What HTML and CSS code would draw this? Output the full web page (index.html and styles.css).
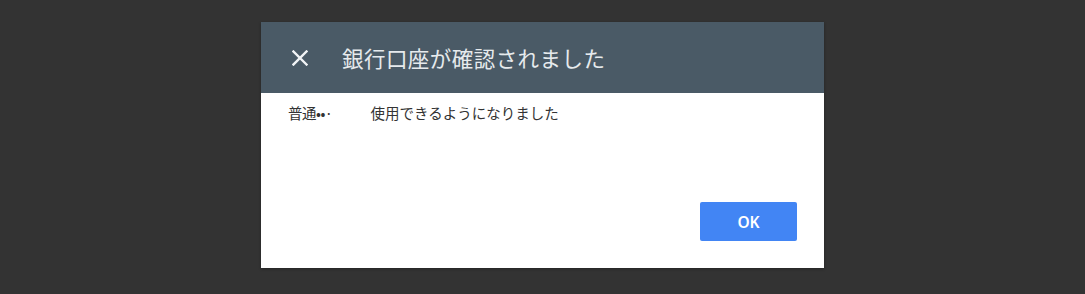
FILE: index.html
```html
<!DOCTYPE html>
<html lang="ja">
<head>
    <meta charset="UTF-8">
    <title>銀行口座が確認されました</title>
    <link rel="stylesheet" href="styles.css">
</head>
<body>
    <div class="dialog">
        <div class="dialog-header">
            <span class="close-icon">
                <svg width="16" height="16" viewBox="0 0 16 16">
                    <path d="M1.5 1.5 L14.5 14.5 M14.5 1.5 L1.5 14.5" stroke="#f2f4f6" stroke-width="2.4" stroke-linecap="square"/>
                </svg>
            </span>
            <h1>銀行口座が確認されました</h1>
        </div>
        <div class="dialog-body">
            <p class="message"><span class="account">普通••·</span><span class="redacted"></span>使用できるようになりました</p>
            <div class="actions">
                <button class="button">OK</button>
            </div>
        </div>
    </div>
</body>
</html>
```

FILE: styles.css
```css
body {
    margin: 0;
    background-color: #333333;
    font-family: "Noto Sans CJK JP", "Noto Sans", sans-serif;
    height: 294px;
    padding-top: 22px;
    box-sizing: border-box;
}
.dialog {
    width: 563px;
    height: 246px;
    margin: 0 auto;
    background: white;
    display: flex;
    flex-direction: column;
    box-shadow: 0 1px 3px rgba(0, 0, 0, 0.3);
}
.dialog-header {
    height: 71px;
    background: #4a5a66;
    display: flex;
    align-items: center;
    padding-left: 31px;
    box-sizing: border-box;
}
.close-icon {
    width: 16px;
    height: 16px;
    display: flex;
}
.dialog-header h1 {
    margin: 0 0 0 34px;
    font-size: 21.5px;
    font-weight: 400;
    color: #e6eaed;
    letter-spacing: 0.45px;
}
.dialog-body {
    flex: 1;
    display: flex;
    flex-direction: column;
    padding: 10px 27px 27px 27px;
}
.message {
    margin: 0;
    font-size: 14.5px;
    color: #333;
    line-height: 20px;
    flex: 1;
}
.account {
    letter-spacing: -0.5px;
}
.redacted {
    display: inline-block;
    width: 38px;
}
.actions {
    display: flex;
    justify-content: flex-end;
}
.button {
    width: 97px;
    height: 39px;
    background: #4285f4;
    color: white;
    border: none;
    border-radius: 2px;
    font-family: "Noto Sans", sans-serif;
    font-size: 15.5px;
    font-weight: 600;
    cursor: pointer;
}
```
